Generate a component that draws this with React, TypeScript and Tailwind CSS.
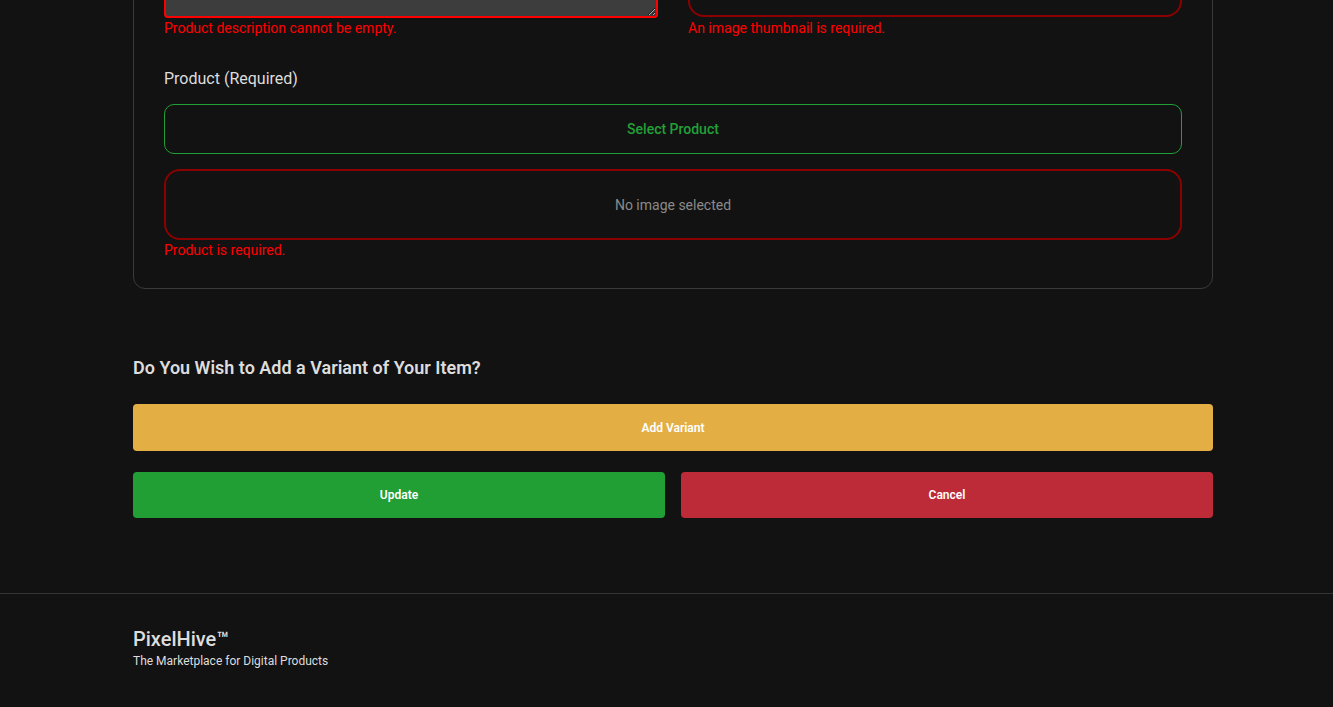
import React from "react";

export default function App() {
  return (
    <div
      className="min-h-screen w-full overflow-hidden bg-[#121212] text-[#dddddd]"
      style={{ fontFamily: "Roboto, 'Noto Sans', sans-serif" }}
    >
      <main className="pl-[133px] w-[1213px]">
        <section className="-mt-[150px] rounded-[12px] border border-[#3a3a3a] px-[30px] pt-[30px] pb-[28px]">
          <div className="grid grid-cols-2 gap-x-[30px]">
            <div className="flex flex-col">
              <textarea
                readOnly
                className="h-[137px] w-full rounded-[4px] border-2 border-[#ff0000] bg-[#3d3d3d] outline-none"
              />
              <p className="text-sm leading-5 text-[#ff0000]">Product description cannot be empty.</p>
            </div>
            <div className="flex flex-col">
              <div className="h-[136px] w-full rounded-[16px] border-2 border-[#8b0000]" />
              <p className="mt-px text-sm leading-5 text-[#ff0000]">An image thumbnail is required.</p>
            </div>
          </div>

          <label className="mt-[29px] block text-base leading-6 text-[#dddddd]">Product (Required)</label>

          <button className="mt-[13px] flex h-[50px] w-full items-center justify-center rounded-[10px] border border-[#22a038] text-sm font-medium text-[#22a038]">
            Select Product
          </button>

          <div className="mt-[15px] flex h-[71px] w-full items-center justify-center rounded-[16px] border-2 border-[#8b0000] text-sm text-[#8a8a8a]">
            No image selected
          </div>
          <p className="text-sm leading-5 text-[#ff0000]">Product is required.</p>
        </section>

        <h2 className="mt-[65px] text-lg leading-7 font-semibold text-[#dddddd]">
          Do You Wish to Add a Variant of Your Item?
        </h2>

        <button className="mt-[22px] flex h-[47px] w-full items-center justify-center rounded-[4px] bg-[#e3af44] text-xs font-semibold text-white">
          Add Variant
        </button>

        <div className="mt-[21px] grid grid-cols-2 gap-x-[16px]">
          <button className="flex h-[46px] items-center justify-center rounded-[4px] bg-[#219f35] text-xs font-semibold text-white">
            Update
          </button>
          <button className="flex h-[46px] items-center justify-center rounded-[4px] bg-[#bd2a38] text-xs font-semibold text-white">
            Cancel
          </button>
        </div>
      </main>

      <footer className="mt-[75px] border-t border-[#333333] pl-[133px] pt-[31px] pb-[38px]">
        <div className="text-xl leading-7 font-medium text-[#dddddd]">PixelHive™</div>
        <div className="text-xs leading-4 text-[#dddddd]">The Marketplace for Digital Products</div>
      </footer>
    </div>
  );
}
